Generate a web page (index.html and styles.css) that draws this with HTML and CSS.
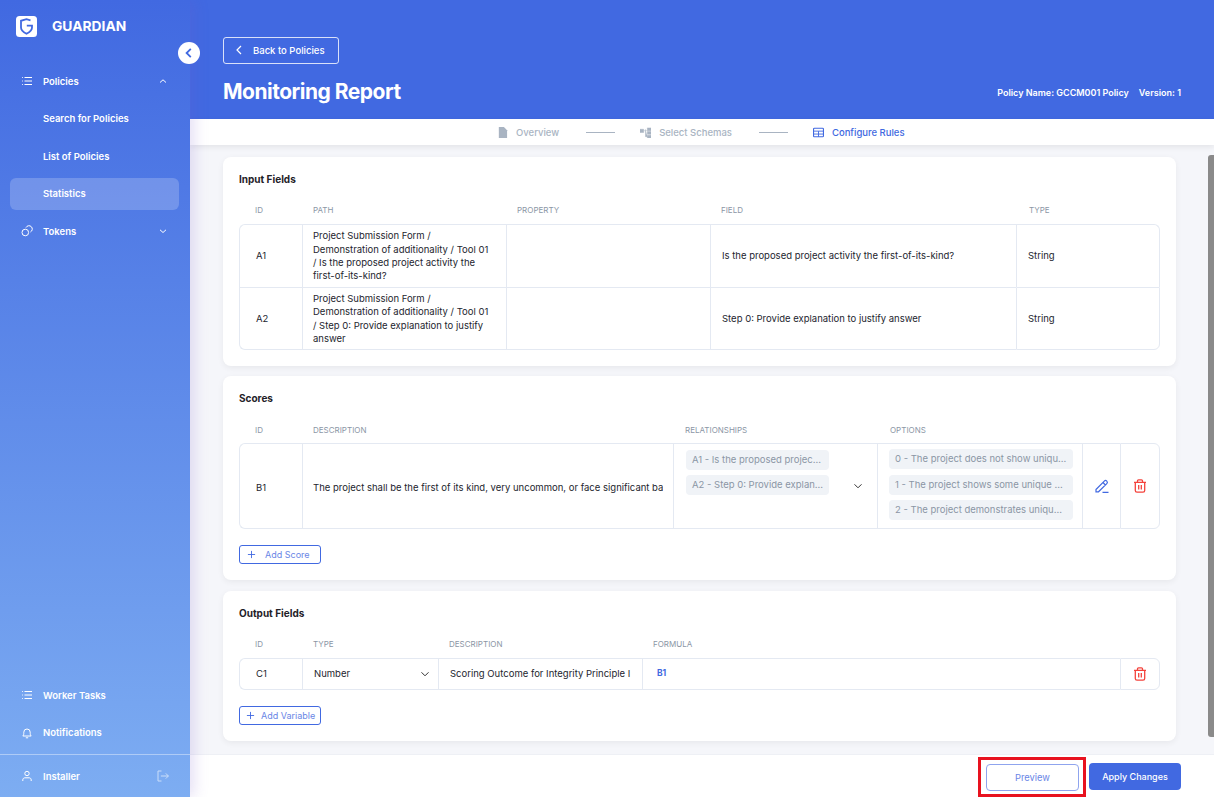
FILE: index.html
```html
<!DOCTYPE html>
<html lang="en">
<head>
    <meta charset="UTF-8">
    <meta name="viewport" content="width=device-width, initial-scale=1.0">
    <title>Monitoring Report</title>
    <link rel="stylesheet" href="styles.css">
</head>
<body>
    <aside class="sidebar">
        <div class="brand">
            <svg class="logo" viewBox="0 0 21 21"><rect width="21" height="21" rx="3.5" fill="#fff"/><path d="M14.500 4.300 10.500 3.200 5 4.800V11.500C5 14.300 7.500 16.200 10.500 17.800 13.500 16.200 16 14.300 16 11.500V9.700H10.800" fill="none" stroke="#4169e1" stroke-width="1.800"/></svg>
            <span>GUARDIAN</span>
        </div>
        <nav class="nav-top">
            <a class="nav-item">
                <svg class="nav-icon" viewBox="0 0 12 12"><path d="M3.500 2.500H11M3.500 6H11M3.500 9.500H11M1 2.500h.8M1 6h.8M1 9.500h.8" fill="none" stroke="currentColor"/></svg>
                <span class="nav-label">Policies</span>
                <svg class="nav-caret" viewBox="0 0 10 10"><path d="M2 6.500 5 3.800 8 6.500" fill="none" stroke="currentColor"/></svg>
            </a>
            <a class="nav-item">
                <span class="nav-icon"></span>
                <span class="nav-label">Search for Policies</span>
            </a>
            <a class="nav-item">
                <span class="nav-icon"></span>
                <span class="nav-label">List of Policies</span>
            </a>
            <a class="nav-item active">
                <span class="nav-icon"></span>
                <span class="nav-label">Statistics</span>
            </a>
            <a class="nav-item">
                <svg class="nav-icon" viewBox="0 0 12 12"><circle cx="4.300" cy="7.500" r="3.300" fill="none" stroke="currentColor"/><path d="M5 2.600A3.300 3.300 0 1 1 9.400 7" fill="none" stroke="currentColor"/></svg>
                <span class="nav-label">Tokens</span>
                <svg class="nav-caret" viewBox="0 0 10 10"><path d="M2 3.800 5 6.500 8 3.800" fill="none" stroke="currentColor"/></svg>
            </a>
        </nav>
        <nav class="nav-bottom">
            <a class="nav-item">
                <svg class="nav-icon" viewBox="0 0 12 12"><path d="M3.500 2.500H11M3.500 6H11M3.500 9.500H11M1 2.500h.8M1 6h.8M1 9.500h.8" fill="none" stroke="currentColor"/></svg>
                <span class="nav-label">Worker Tasks</span>
            </a>
            <a class="nav-item">
                <svg class="nav-icon" viewBox="0 0 12 12"><path d="M1.800 9H10.200C9.200 8 9.200 7 9.200 5.200A3.200 3.200 0 0 0 2.800 5.200C2.800 7 2.800 8 1.800 9ZM4.800 10.800H7.200" fill="none" stroke="currentColor"/></svg>
                <span class="nav-label">Notifications</span>
            </a>
        </nav>
        <div class="user-row">
            <svg class="nav-icon" viewBox="0 0 12 12"><circle cx="6" cy="3.500" r="2.200" fill="none" stroke="currentColor"/><path d="M1.800 11V9.800C1.800 8.400 3 7.800 4 7.800H8C9 7.800 10.200 8.400 10.200 9.800V11" fill="none" stroke="currentColor"/></svg>
            <span class="nav-label">Installer</span>
            <svg class="logout" viewBox="0 0 12 12"><path d="M4.500 1H1V11H4.500M3.800 6H11.400M8.800 3.400 11.400 6 8.800 8.600" fill="none" stroke="currentColor"/></svg>
        </div>
    </aside>

    <button class="collapse-btn">
        <svg viewBox="0 0 10 10"><path d="M6.500 1.500 3 5 6.500 8.500" fill="none" stroke="#4169e1" stroke-width="1.500"/></svg>
    </button>

    <main class="main">
        <header class="page-header">
            <button class="back-btn">
                <svg viewBox="0 0 10 10"><path d="M7 1 3 5 7 9" fill="none" stroke="#fff" stroke-width="1.200"/></svg>
                Back to Policies
            </button>
            <div class="title-row">
                <h1>Monitoring Report</h1>
                <div class="policy-info">
                    <span>Policy Name: GCCM001 Policy</span>
                    <span>Version: 1</span>
                </div>
            </div>
        </header>

        <div class="steps">
            <div class="step">
                <svg class="step-icon" viewBox="0 0 12 12"><path d="M2 0H7.500L11 3.500V12H2Z" fill="currentColor"/></svg>
                Overview
            </div>
            <div class="step-line"></div>
            <div class="step">
                <svg class="step-icon" viewBox="0 0 12 12"><path d="M0 2.500H4V6H0ZM8 1H12V4H8ZM8 5H12V8H8ZM8 9H12V12H8ZM4 4H8M6 2.500V10.500H8" fill="currentColor" stroke="currentColor" stroke-width=".5"/></svg>
                Select Schemas
            </div>
            <div class="step-line"></div>
            <div class="step step-active">
                <svg class="step-icon" viewBox="0 0 12 12"><rect x=".6" y="1.300" width="10.800" height="9.400" rx="1" fill="none" stroke="currentColor" stroke-width="1.200"/><path d="M.6 4.500H11.400M.6 7.700H11.400M6 4.500V10.700" fill="none" stroke="currentColor"/></svg>
                Configure Rules
            </div>
        </div>

        <div class="content">
            <section class="card card-input">
                <h2>Input Fields</h2>
                <table class="grid">
                    <colgroup><col class="w63"><col class="w204"><col class="w204"><col class="w306"><col></colgroup>
                    <thead><tr><th>ID</th><th>PATH</th><th>PROPERTY</th><th>FIELD</th><th class="th-type">TYPE</th></tr></thead>
                    <tbody>
                        <tr class="row-tall">
                            <td class="cell-id">A1</td>
                            <td class="cell-path">Project Submission Form / Demonstration of additionality / Tool 01 / Is the proposed project activity the first-of-its-kind?</td>
                            <td></td>
                            <td class="cell-text">Is the proposed project activity the first-of-its-kind?</td>
                            <td class="cell-text">String</td>
                        </tr>
                        <tr class="row-tall">
                            <td class="cell-id">A2</td>
                            <td class="cell-path">Project Submission Form / Demonstration of additionality / Tool 01 / Step 0: Provide explanation to justify answer</td>
                            <td></td>
                            <td class="cell-text">Step 0: Provide explanation to justify answer</td>
                            <td class="cell-text">String</td>
                        </tr>
                    </tbody>
                </table>
            </section>

            <section class="card card-scores">
                <h2>Scores</h2>
                <table class="grid">
                    <colgroup><col class="w63"><col class="w371"><col class="w204"><col class="w205"><col class="w38"><col></colgroup>
                    <thead><tr class="head-scores"><th>ID</th><th>DESCRIPTION</th><th class="th-rel">RELATIONSHIPS</th><th class="th-options">OPTIONS</th><th></th><th></th></tr></thead>
                    <tbody>
                        <tr class="row-score">
                            <td class="cell-id cell-low">B1</td>
                            <td class="cell-low"><div class="clip">The project shall be the first of its kind, very uncommon, or face significant barriers to implementation</div></td>
                            <td class="cell-rel">
                                <div class="rel-wrap">
                                    <div class="chips">
                                        <div class="chip">A1 - Is the proposed projec...</div>
                                        <div class="chip">A2 - Step 0: Provide explan...</div>
                                    </div>
                                    <svg class="select-caret" viewBox="0 0 10 10"><path d="M1.500 3.300 5 6.800 8.500 3.300" fill="none" stroke="#333" stroke-width="1"/></svg>
                                </div>
                            </td>
                            <td class="cell-opts">
                                <div class="chip chip-opt">0 - The project does not show uniqu...</div>
                                <div class="chip chip-opt">1 - The project shows some unique ...</div>
                                <div class="chip chip-opt">2 - The project demonstrates uniqu...</div>
                            </td>
                            <td class="cell-action">
                                <svg class="action-icon" viewBox="0 0 14 14"><path d="M1 10.500 9.300 2.100A1.600 1.600 0 0 1 11.800 4.600L3.500 12.800H1ZM8 3.500 10.400 6M7.500 13.300H13.500" fill="none" stroke="#4169e1" stroke-width="1.200"/></svg>
                            </td>
                            <td class="cell-action">
                                <svg class="action-icon" viewBox="0 0 14 14"><path d="M1 3.300H13M4.500 3V1.800Q4.500 .8 5.500 .8H8.500Q9.500 .8 9.500 1.800V3M2.300 3.300V11.500Q2.300 13.200 4 13.200H10Q11.700 13.200 11.700 11.500V3.300M5.700 6V10.500M8.300 6V10.500" fill="none" stroke="#f4433c" stroke-width="1.300"/></svg>
                            </td>
                        </tr>
                    </tbody>
                </table>
                <button class="add-btn add-score">
                    <svg viewBox="0 0 10 10"><path d="M5 1V9M1 5H9" fill="none" stroke="#4169e1"/></svg>
                    Add Score
                </button>
            </section>

            <section class="card card-output">
                <h2>Output Fields</h2>
                <table class="grid">
                    <colgroup><col class="w63"><col class="w136"><col class="w204"><col><col class="w40"></colgroup>
                    <thead><tr><th>ID</th><th>TYPE</th><th>DESCRIPTION</th><th>FORMULA</th><th></th></tr></thead>
                    <tbody>
                        <tr class="row-output">
                            <td class="cell-id">C1</td>
                            <td class="cell-select">
                                <div class="select-wrap">Number
                                    <svg class="select-caret" viewBox="0 0 10 10"><path d="M1.500 3.300 5 6.800 8.500 3.300" fill="none" stroke="#333" stroke-width="1"/></svg>
                                </div>
                            </td>
                            <td class="cell-desc"><div class="clip">Scoring Outcome for Integrity Principle I</div></td>
                            <td class="cell-formula">B1</td>
                            <td class="cell-action">
                                <svg class="action-icon" viewBox="0 0 14 14"><path d="M1 3.300H13M4.500 3V1.800Q4.500 .8 5.500 .8H8.500Q9.500 .8 9.500 1.800V3M2.300 3.300V11.500Q2.300 13.200 4 13.200H10Q11.700 13.200 11.700 11.500V3.300M5.700 6V10.500M8.300 6V10.500" fill="none" stroke="#f4433c" stroke-width="1.300"/></svg>
                            </td>
                        </tr>
                    </tbody>
                </table>
                <button class="add-btn add-variable">
                    <svg viewBox="0 0 10 10"><path d="M5 1V9M1 5H9" fill="none" stroke="#4169e1"/></svg>
                    Add Variable
                </button>
            </section>
            <div class="scroll-thumb"></div>
        </div>

        <footer class="actions">
            <div class="highlight">
                <button class="btn-preview">Preview</button>
            </div>
            <button class="btn-apply">Apply Changes</button>
        </footer>
    </main>
</body>
</html>
```

FILE: styles.css
```css
* {
    box-sizing: border-box;
}
html, body {
    height: 100%;
}
body {
    margin: 0;
    display: flex;
    height: 797px;
    overflow: hidden;
    font-family: Inter, 'Noto Sans', sans-serif;
    font-size: 9.500px;
    color: #23252e;
    background-color: #fff;
}
button {
    font-family: inherit;
    cursor: pointer;
}

/* sidebar */
.sidebar {
    position: relative;
    z-index: 2;
    flex: 0 0 190px;
    display: flex;
    flex-direction: column;
    color: #fff;
    background: linear-gradient(180deg, #4169e1 0%, #7dadf2 100%);
    box-shadow: 4px 0 14px rgba(120, 90, 200, 0.2);
}
.brand {
    display: flex;
    align-items: center;
    gap: 15px;
    height: 52px;
    padding-left: 16px;
    font-size: 13.800px;
    font-weight: 700;
}
.logo {
    width: 21px;
    height: 21px;
}
.nav-top {
    display: flex;
    flex-direction: column;
    gap: 5.500px;
    padding: 13px 11px 0 10px;
}
.nav-bottom {
    display: flex;
    flex-direction: column;
    gap: 5.500px;
    margin-top: auto;
    padding: 0 11px 5.500px 10px;
}
.nav-item {
    display: flex;
    align-items: center;
    height: 32px;
    padding: 0 10px 0 11px;
    border-radius: 6px;
    font-size: 9.500px;
    font-weight: 600;
}
.nav-item.active {
    background-color: rgba(255, 255, 255, 0.2);
}
.nav-icon {
    flex: 0 0 12px;
    width: 12px;
    height: 12px;
    margin-right: 10px;
}
.nav-label {
    flex: 1;
}
.nav-caret {
    width: 10px;
    height: 10px;
    margin-right: 1px;
}
.user-row {
    display: flex;
    align-items: center;
    height: 43px;
    padding: 0 21px;
    border-top: 1px solid rgba(255, 255, 255, 0.4);
    font-weight: 600;
}
.logout {
    width: 12px;
    height: 12px;
    opacity: 0.6;
}
.collapse-btn {
    position: absolute;
    z-index: 3;
    left: 178px;
    top: 42px;
    width: 22px;
    height: 22px;
    padding: 5px;
    border: none;
    border-radius: 50%;
    background-color: #fff;
}
.collapse-btn svg {
    display: block;
    width: 12px;
    height: 12px;
}

/* header */
.main {
    flex: 1;
    min-width: 0;
    display: flex;
    flex-direction: column;
}
.page-header {
    flex: 0 0 119px;
    padding: 37px 33px 0;
    color: #fff;
    background-color: #4169e1;
}
.back-btn {
    display: flex;
    align-items: center;
    gap: 9px;
    width: 116px;
    height: 27px;
    padding: 0 0 1px 10px;
    border: 1px solid rgba(255, 255, 255, 0.8);
    border-radius: 3px;
    font-size: 9.500px;
    font-weight: 500;
    color: #fff;
    background: none;
}
.back-btn svg {
    width: 10px;
    height: 10px;
}
.title-row {
    display: flex;
    align-items: center;
    justify-content: space-between;
    margin-top: 13px;
}
h1 {
    margin: 0;
    font-size: 21px;
    font-weight: 700;
    line-height: 30px;
    letter-spacing: -0.5px;
}
.policy-info {
    display: flex;
    gap: 10px;
    font-size: 9px;
    font-weight: 600;
}

/* steps */
.steps {
    position: relative;
    z-index: 1;
    flex: 0 0 26px;
    display: flex;
    align-items: center;
    padding-left: 307px;
    font-size: 9.500px;
    font-weight: 500;
    color: #a9b4c2;
    background-color: #fff;
    box-shadow: 0 2px 6px rgba(0, 0, 0, 0.08);
}
.step {
    display: flex;
    align-items: center;
    gap: 8px;
}
.step-active {
    color: #4169e1;
}
.step-icon {
    width: 11px;
    height: 11px;
}
.step-line {
    width: 29px;
    height: 1px;
    margin: 0 25px 0 27px;
    background-color: #a9b4c2;
}

/* content */
.content {
    position: relative;
    flex: 1;
    min-height: 0;
    display: flex;
    flex-direction: column;
    padding: 12px 38px 0 33px;
    background-color: #f5f6fa;
}
.card {
    padding: 0 16px;
    border-radius: 8px;
    background-color: #fff;
    box-shadow: 0 2px 6px rgba(0, 0, 0, 0.06);
}
.card-input {
    height: 209px;
}
.card-scores {
    height: 204px;
    margin-top: 10px;
}
.card-output {
    height: 150px;
    margin-top: 11px;
}
h2 {
    margin: 0;
    padding-top: 15px;
    font-size: 10px;
    font-weight: 700;
    line-height: 14px;
    color: #1f2128;
}
.grid {
    width: 921px;
    margin-top: 8px;
    border-collapse: separate;
    border-spacing: 0;
    table-layout: fixed;
}
.w38 { width: 38px; }
.w40 { width: 40px; }
.w63 { width: 63px; }
.w136 { width: 136px; }
.w204 { width: 204px; }
.w205 { width: 205px; }
.w306 { width: 306px; }
.w371 { width: 371px; }
.grid th {
    height: 30px;
    padding: 2px 11px 0;
    font-size: 8px;
    font-weight: 400;
    text-align: left;
    color: #8b96a5;
}
.grid th:first-child {
    padding-left: 16px;
}
.grid th.th-type, .grid th.th-options {
    padding-left: 13px;
}
.grid th.th-rel {
    padding-left: 12px;
}
.grid .head-scores th {
    padding-top: 4px;
}
.grid td {
    padding: 0 10px;
    line-height: 13.300px;
    border-top: 1px solid #e4e9f2;
    border-left: 1px solid #e4e9f2;
}
.grid tr:last-child td {
    border-bottom: 1px solid #e4e9f2;
}
.grid td:last-child {
    border-right: 1px solid #e4e9f2;
}
.grid tbody tr:first-child td:first-child {
    border-top-left-radius: 6px;
}
.grid tbody tr:first-child td:last-child {
    border-top-right-radius: 6px;
}
.grid tbody tr:last-child td:first-child {
    border-bottom-left-radius: 6px;
}
.grid tbody tr:last-child td:last-child {
    border-bottom-right-radius: 6px;
}
.grid td.cell-id {
    padding-left: 16px;
}
.grid td.cell-path {
    padding-right: 16px;
}
.grid td.cell-text {
    padding-left: 11px;
}
.grid td.cell-low {
    padding-top: 3px;
}
.row-tall {
    height: 63px;
}
.row-score {
    height: 86px;
}
.row-output {
    height: 32px;
}
.clip {
    overflow: hidden;
    white-space: nowrap;
}
.rel-wrap {
    display: flex;
    align-items: center;
}
.chips {
    flex: 0 0 143px;
    display: flex;
    flex-direction: column;
    gap: 5px;
    margin: -8px 0 0 2px;
    padding-bottom: 20px;
}
.chip {
    height: 20px;
    padding: 0 6px;
    border-radius: 4px;
    line-height: 20px;
    white-space: nowrap;
    overflow: hidden;
    color: #8b96a5;
    background-color: #f0f3f7;
}
.grid td.cell-opts {
    padding: 0 0 3px 11px;
}
.chip-opt {
    width: 184px;
    margin: 5.500px 0;
}
.cell-opts .chip-opt:first-child {
    margin-top: 0;
}
.cell-opts .chip-opt:last-child {
    margin-bottom: 0;
}
.select-caret {
    width: 10px;
    height: 10px;
    margin-left: auto;
    margin-right: 4px;
}
.cell-select .select-caret {
    margin-right: -2px;
}
.grid td.cell-action {
    padding: 0;
}
.action-icon {
    display: block;
    width: 14px;
    height: 14px;
    margin: 0 auto;
}
.select-wrap {
    display: flex;
    align-items: center;
    padding-left: 1px;
}
.grid td.cell-desc {
    padding-left: 11px;
}
.cell-formula {
    font-size: 8.500px;
    font-weight: 700;
    color: #4169e1;
}
.grid td.cell-formula {
    padding-left: 14px;
}
.add-btn {
    display: flex;
    align-items: center;
    width: 82px;
    height: 19px;
    padding: 0;
    border: 1px solid #4169e1;
    border-radius: 3px;
    font-size: 9px;
    color: #6a86e6;
    background-color: #fff;
}
.add-btn svg {
    width: 9px;
    height: 9px;
}
.add-score {
    gap: 9px;
    margin-top: 16px;
    padding-left: 7px;
}
.add-variable {
    gap: 6px;
    margin-top: 16px;
    padding-left: 6px;
}
.scroll-thumb {
    position: absolute;
    right: 0;
    top: 10px;
    width: 6px;
    height: 582px;
    border-radius: 3px 0 0 3px;
    background-color: #8a8a8a;
}

/* footer */
.actions {
    flex: 0 0 42px;
    display: flex;
    align-items: flex-start;
    justify-content: flex-end;
    gap: 3px;
    padding: 2px 33px 0 0;
    border-top: 1px solid #eef0f5;
    background-color: #fff;
}
.highlight {
    width: 108px;
    height: 40px;
    padding: 4px 5px 0;
    border: 3px solid #e8121f;
}
.btn-preview {
    display: block;
    width: 93px;
    height: 27px;
    border: 1px solid #8fa4ee;
    border-radius: 4px;
    font-size: 9.300px;
    color: #6a86e6;
    background-color: #fff;
}
.btn-apply {
    width: 92px;
    height: 27px;
    margin-top: 6px;
    border: none;
    border-radius: 4px;
    font-size: 9px;
    font-weight: 500;
    color: #fff;
    background-color: #4169e1;
}
```
